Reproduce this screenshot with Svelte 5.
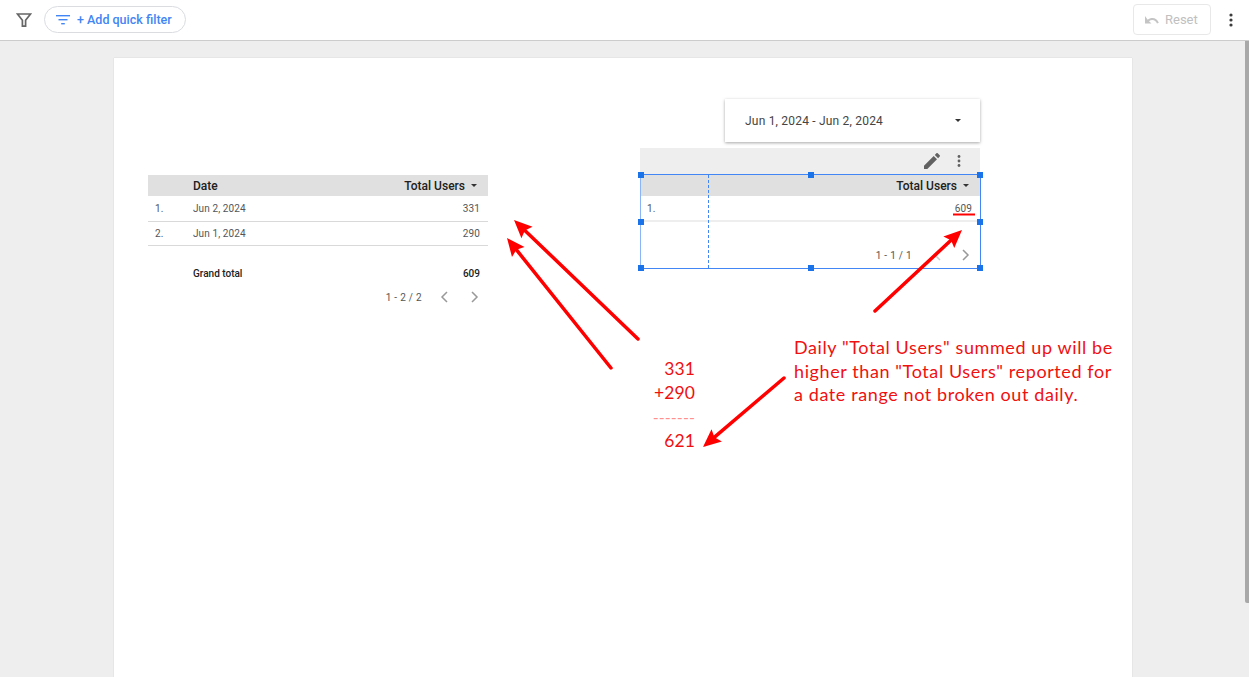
<script>
	const arrows = [
		{ x1: 638, y1: 339, x2: 514, y2: 220 },
		{ x1: 611, y1: 368, x2: 507, y2: 238 },
		{ x1: 875, y1: 311, x2: 962, y2: 230 },
		{ x1: 784, y1: 378, x2: 703, y2: 447 }
	];

	// arrow head is a triangle on the tip, with a shallow notch where the shaft joins
	const unit = (a) => {
		const len = Math.hypot(a.x2 - a.x1, a.y2 - a.y1);
		return [(a.x2 - a.x1) / len, (a.y2 - a.y1) / len];
	};

	const head = (a) => {
		const [ux, uy] = unit(a);
		const bx = a.x2 - ux * 18;
		const by = a.y2 - uy * 18;
		const nx = a.x2 - ux * 15;
		const ny = a.y2 - uy * 15;
		return `${a.x2},${a.y2} ${bx - uy * 8},${by + ux * 8} ${nx},${ny} ${bx + uy * 8},${by - ux * 8}`;
	};

	const shaftEnd = (a) => {
		const [ux, uy] = unit(a);
		return [a.x2 - ux * 14, a.y2 - uy * 14];
	};

	const rows = [
		{ n: '1.', date: 'Jun 2, 2024', users: 331 },
		{ n: '2.', date: 'Jun 1, 2024', users: 290 }
	];

	const handles = [
		[0, 0], [50, 0], [100, 0],
		[0, 51], [100, 51],
		[0, 100], [50, 100], [100, 100]
	];
</script>

<div class="app">
	<header class="toolbar">
		<svg class="funnel" width="16" height="16" viewBox="0 0 16 16" fill="none" stroke="#666" stroke-width="1.7">
			<path d="M1.5 2h13L9.6 8.2V14.2H6.4V8.2z" />
		</svg>
		<button type="button" class="quick-filter">
			<svg width="14" height="10" viewBox="0 0 14 10" fill="#4285f4">
				<rect x="0" y="0" width="14" height="1.4" />
				<rect x="2.5" y="4" width="9" height="1.4" />
				<rect x="5.2" y="8" width="3.6" height="1.4" />
			</svg>
			<span>+ Add quick filter</span>
		</button>
		<div class="spacer"></div>
		<button type="button" class="reset">
			<svg width="14" height="8" viewBox="0 0 14 8" fill="#c4c4c4">
				<path d="M0 0v7.500h6.500L4 5.200C5 4.400 6.200 4 7.400 4c2 0 3.700 1.200 4.600 3.500l1.800-.7C12.600 3.800 10.300 2 7.400 2 5.700 2 4 2.600 2.700 3.800z" />
			</svg>
			<span>Reset</span>
		</button>
		<svg class="more" width="4" height="14" viewBox="0 0 4 14" fill="#3c3c3c">
			<circle cx="2" cy="2" r="1.6" />
			<circle cx="2" cy="7" r="1.6" />
			<circle cx="2" cy="12" r="1.6" />
		</svg>
	</header>

	<main class="canvas">
		<div class="scrollbar"></div>
		<section class="page">
			<div class="widget left-table">
				<div class="head">
					<span class="col-n"></span>
					<span class="col-date">Date</span>
					<span class="col-users">Total Users <i class="caret"></i></span>
				</div>
				{#each rows as row}
					<div class="row">
						<span class="col-n">{row.n}</span>
						<span class="col-date">{row.date}</span>
						<span class="col-users">{row.users}</span>
					</div>
				{/each}
				<div class="total">
					<span class="col-n"></span>
					<span class="col-date">Grand total</span>
					<span class="col-users">609</span>
				</div>
				<div class="pager">
					<span class="pager-count">1 - 2 / 2</span>
					<svg width="8" height="12" viewBox="0 0 8 12" fill="none" stroke="#999" stroke-width="1.5"><path d="M7 1L2 6l5 5" /></svg>
					<svg width="8" height="12" viewBox="0 0 8 12" fill="none" stroke="#999" stroke-width="1.5"><path d="M1 1l5 5-5 5" /></svg>
				</div>
			</div>

			<div class="widget date-control">
				<span>Jun 1, 2024 - Jun 2, 2024</span>
				<i class="caret"></i>
			</div>

			<div class="widget edit-bar">
				<svg width="16" height="16" viewBox="0 0 16 16" fill="#616161">
					<path d="M0 12.700V16h3.300l9.700-9.700L9.700 3zM15.700 3.600c.4-.4.4-.9 0-1.300L13.700.3c-.4-.4-.9-.4-1.300 0l-1.600 1.600 3.300 3.300z" />
				</svg>
				<svg width="4" height="12" viewBox="0 0 4 12" fill="#616161">
					<circle cx="2" cy="1.500" r="1.400" />
					<circle cx="2" cy="6" r="1.400" />
					<circle cx="2" cy="10.500" r="1.400" />
				</svg>
			</div>

			<div class="widget right-table">
				<div class="head">
					<span class="col-users">Total Users <i class="caret"></i></span>
				</div>
				<div class="row">
					<span class="col-n">1.</span>
					<span class="col-users">609</span>
				</div>
				<div class="pager">
					<span>1 - 1 / 1</span>
					<svg width="8" height="12" viewBox="0 0 8 12" fill="none" stroke="#ccc" stroke-width="1.5"><path d="M7 1L2 6l5 5" /></svg>
					<svg width="8" height="12" viewBox="0 0 8 12" fill="none" stroke="#999" stroke-width="1.5"><path d="M1 1l5 5-5 5" /></svg>
				</div>
				<div class="divider"></div>
				{#each handles as h}
					<b class="handle" style="left: {h[0]}%; top: {h[1]}%;"></b>
				{/each}
			</div>

			<div class="sum">
				<span>331</span>
				<span>+290</span>
				<span class="dashes">-------</span>
				<span>621</span>
			</div>

			<p class="note">Daily "Total Users" summed up will be<br />higher than "Total Users" reported for<br />a date range not broken out daily.</p>
		</section>

		<svg class="arrows" width="1249" height="677" viewBox="0 0 1249 677">
			<line x1="953" y1="214.500" x2="975" y2="214.500" stroke="#f00" stroke-width="2" />
			{#each arrows as a}
				<line x1={a.x1} y1={a.y1} x2={shaftEnd(a)[0]} y2={shaftEnd(a)[1]} stroke="#f00" stroke-width="3.500" stroke-linecap="round" />
				<polygon points={head(a)} fill="#f00" />
			{/each}
		</svg>
	</main>
</div>

<style>
	:global(body) {
		margin: 0;
		overflow: hidden;
	}

	.app {
		width: 1249px;
		height: 677px;
		display: flex;
		flex-direction: column;
		font-family: Roboto, "Liberation Sans", sans-serif;
		background: #eee;
		overflow: hidden;
	}

	.toolbar {
		height: 39px;
		flex: none;
		display: flex;
		align-items: center;
		padding: 0 16px 1px 16px;
		background: #fff;
		border-bottom: 1px solid #ccc;
	}

	.funnel {
		margin-right: 12px;
	}

	.quick-filter {
		display: flex;
		align-items: center;
		gap: 7px;
		height: 27px;
		padding: 0 13px 0 11px;
		background: #fff;
		border: 1px solid #dadce0;
		border-radius: 14px;
		color: #4285f4;
		font: 500 12.500px Roboto, sans-serif;
	}

	.spacer {
		flex: 1;
	}

	.reset {
		display: flex;
		align-items: center;
		gap: 6px;
		width: 78px;
		height: 31px;
		padding: 0 0 0 11px;
		margin-right: 18px;
		background: #fff;
		border: 1px solid #e8e8e8;
		border-radius: 4px;
		color: #c0c0c0;
		font: 400 13px Roboto, sans-serif;
	}

	.canvas {
		position: relative;
		flex: 1;
		padding: 17px 0 0 114px;
	}

	.scrollbar {
		position: absolute;
		top: 0;
		right: 0;
		width: 4px;
		height: 562px;
		background: #a8a8a8;
		border-radius: 0 0 0 2px;
	}

	.page {
		position: relative;
		width: 1018px;
		height: 700px;
		background: #fff;
		box-shadow: 0 0 1px rgba(0, 0, 0, 0.2);
	}

	.arrows {
		position: absolute;
		left: 0;
		top: -41px;
		pointer-events: none;
	}

	/* report widgets sit on a free canvas, so their place is absolute */
	.widget {
		position: absolute;
		box-sizing: border-box;
	}

	.left-table {
		left: 34px;
		top: 117px;
		width: 340px;
	}

	.head {
		display: flex;
		align-items: center;
		height: 21px;
		background: #e0e0e0;
		color: #212121;
		font-size: 12px;
		font-weight: 500;
	}

	.row {
		display: flex;
		align-items: center;
		box-sizing: border-box;
		height: 26px;
		border-bottom: 1px solid #d9d9d9;
		color: #555;
		font-size: 10px;
		letter-spacing: 0.1px;
	}

	.left-table .row:nth-of-type(3) {
		height: 24px;
	}

	.col-n {
		width: 45px;
		padding-left: 7px;
		box-sizing: border-box;
	}

	.col-users {
		margin-left: auto;
		padding-right: 8px;
		display: flex;
		align-items: center;
		gap: 6px;
	}

	.head .col-users {
		padding-right: 11px;
	}

	.caret {
		display: inline-block;
		border: 3px solid transparent;
		border-top-color: #333;
		border-bottom: 0;
	}

	.total {
		display: flex;
		align-items: center;
		height: 18px;
		margin-top: 18px;
		color: #212121;
		font-size: 10px;
		font-weight: 500;
	}

	.pager {
		display: flex;
		align-items: center;
		justify-content: flex-end;
		gap: 22px;
		height: 18px;
		margin-top: 6px;
		padding-right: 9px;
		color: #555;
		font-size: 10px;
		letter-spacing: 0.3px;
	}

	.left-table .pager {
		gap: 23px;
	}

	.pager-count {
		margin-right: -5px;
	}

	.date-control {
		left: 611px;
		top: 41px;
		width: 255px;
		height: 43px;
		display: flex;
		align-items: center;
		justify-content: space-between;
		padding: 0 19px 0 20px;
		background: #fff;
		box-shadow: 0 1px 3px rgba(0, 0, 0, 0.35);
		color: #444;
		font-size: 12px;
		letter-spacing: 0.2px;
	}

	.edit-bar {
		left: 526px;
		top: 90px;
		width: 340px;
		height: 26px;
		display: flex;
		align-items: center;
		justify-content: flex-end;
		gap: 17px;
		padding-right: 19px;
		background: #eee;
	}

	.right-table {
		left: 526px;
		top: 116px;
		width: 341px;
		height: 95px;
		border: 1px solid #4285f4;
		border-left-color: #8ab4f8;
	}

	.right-table .head {
		height: 21px;
	}

	.right-table .row {
		border-bottom: 2px solid #eee;
	}

	.right-table .col-n {
		padding-left: 6px;
	}

	.right-table .pager {
		margin-top: 24px;
		gap: 21px;
		padding-right: 10px;
	}

	.divider {
		position: absolute;
		left: 67px;
		top: 0;
		bottom: 0;
		border-left: 1px dashed #4285f4;
	}

	.handle {
		position: absolute;
		width: 6px;
		height: 6px;
		margin: -3px 0 0 -3px;
		background: #1a73e8;
	}

	.sum {
		position: absolute;
		right: 437px;
		top: 299px;
		display: flex;
		flex-direction: column;
		align-items: flex-end;
		color: #f01010;
		font: 17.500px/24px Lato, "Open Sans", sans-serif;
		letter-spacing: 0.1px;
	}

	.dashes {
		color: #ff9090;
		font-size: 16px;
	}

	.note {
		position: absolute;
		left: 680px;
		top: 278px;
		margin: 0;
		color: #f01010;
		font: 18px/23.500px Lato, "Open Sans", sans-serif;
		letter-spacing: 0.6px;
		white-space: nowrap;
	}
</style>
